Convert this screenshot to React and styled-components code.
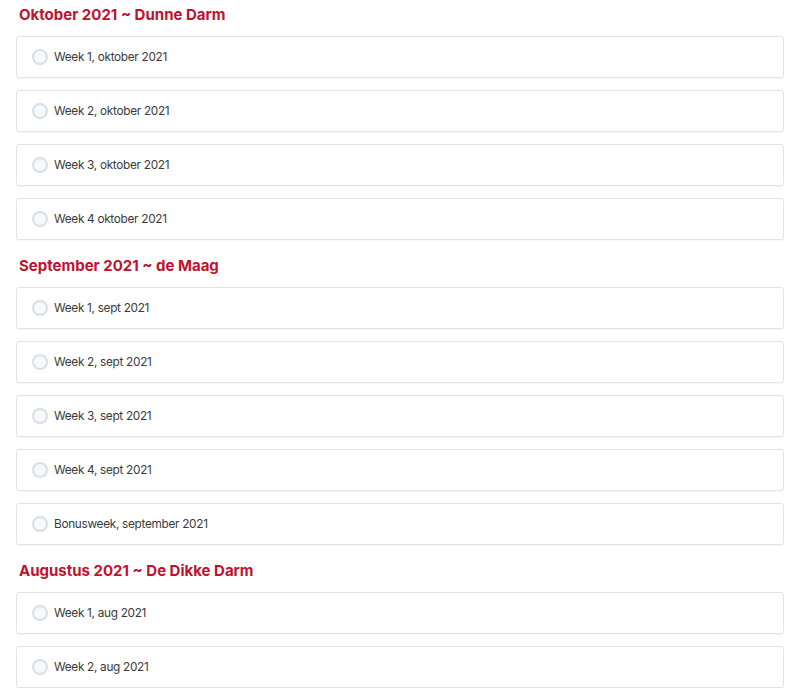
import React from "react";
import styled, { createGlobalStyle } from "styled-components";

const GlobalStyle = createGlobalStyle`
  html, body {
    margin: 0;
    padding: 0;
    background: #fff;
  }
  body {
    font-family: "Inter", "Open Sans", sans-serif;
  }
`;

const Page = styled.div`
  display: flex;
  flex-direction: column;
  gap: 16px;
  padding: 5px 16px 0 16px;
`;

const Section = styled.section`
  display: flex;
  flex-direction: column;
`;

const Heading = styled.h2`
  margin: 0 0 11px 3px;
  font-size: 15px;
  line-height: 20px;
  font-weight: 700;
  color: #c0122f;
`;

const List = styled.div`
  display: flex;
  flex-direction: column;
  gap: 12px;
`;

const Item = styled.label`
  display: flex;
  align-items: center;
  gap: 6px;
  height: 42px;
  box-sizing: border-box;
  padding: 0 0 0 15px;
  border: 1px solid #e3e3e3;
  border-radius: 3px;
  background: #fff;
  box-shadow: 0 1px 1px rgba(0, 0, 0, 0.03);
`;

const Radio = styled.span`
  width: 16px;
  height: 16px;
  box-sizing: border-box;
  border-radius: 50%;
  border: 2px solid #d8e0e7;
  background: #f6f8fa;
  flex-shrink: 0;
`;

const Label = styled.span`
  font-size: 11.8px;
  color: #3a3a3a;
  letter-spacing: -0.3px;
`;

const sections = [
  {
    title: "Oktober 2021 ~ Dunne Darm",
    items: [
      "Week 1, oktober 2021",
      "Week 2, oktober 2021",
      "Week 3, oktober 2021",
      "Week 4 oktober 2021",
    ],
  },
  {
    title: "September 2021 ~ de Maag",
    items: [
      "Week 1, sept 2021",
      "Week 2, sept 2021",
      "Week 3, sept 2021",
      "Week 4, sept 2021",
      "Bonusweek, september 2021",
    ],
  },
  {
    title: "Augustus 2021 ~ De Dikke Darm",
    items: ["Week 1, aug 2021", "Week 2, aug 2021"],
  },
];

export default function App() {
  return (
    <>
      <GlobalStyle />
      <Page>
        {sections.map((s) => (
          <Section key={s.title}>
            <Heading>{s.title}</Heading>
            <List>
              {s.items.map((it) => (
                <Item key={it}>
                  <Radio />
                  <Label>{it}</Label>
                </Item>
              ))}
            </List>
          </Section>
        ))}
      </Page>
    </>
  );
}
